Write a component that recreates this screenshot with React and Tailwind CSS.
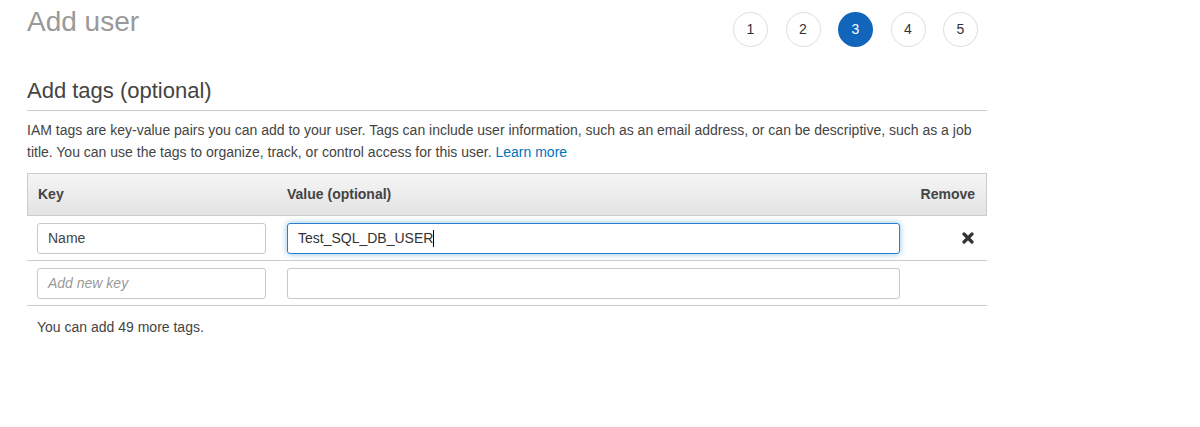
import React from "react";

const STEPS = [1, 2, 3, 4, 5];

function StepCircle({ n, active }) {
  return (
    <div
      className={
        active
          ? "w-[35px] h-[35px] rounded-full bg-[#1166bb] text-white flex items-center justify-center text-[14px]"
          : "w-[35px] h-[35px] rounded-full border border-[#dddddd] bg-white text-[#333] flex items-center justify-center text-[14px]"
      }
    >
      {n}
    </div>
  );
}

function FakeInput({ value, placeholder, focused, width, caret }) {
  return (
    <div
      className={
        focused
          ? "h-[31px] rounded-[3px] border border-[#2a7fd0] shadow-[0_0_6px_rgba(0,115,187,0.45)] bg-white flex items-center px-[10px] text-[14px] text-[#333]"
          : "h-[31px] rounded-[3px] border border-[#c8c8c8] bg-white flex items-center px-[10px] text-[14px] text-[#444]"
      }
      style={{ width }}
    >
      {value ? (
        <span>{value}</span>
      ) : (
        <span className="italic text-[#999]">{placeholder}</span>
      )}
      {caret && <span className="inline-block w-px h-[17px] bg-black" />}
    </div>
  );
}

function RemoveIcon() {
  return (
    <svg width="12" height="12" viewBox="0 0 12 12" fill="none">
      <path d="M2 2 L10 10 M10 2 L2 10" stroke="#333" strokeWidth="3.2" strokeLinecap="round" />
    </svg>
  );
}

export default function App() {
  return (
    <div className="bg-white min-h-[427px] font-['Liberation_Sans',Arial,sans-serif] text-[#444]">
      <div className="w-[960px] ml-[27px]">
        {/* titolo e passi */}
        <div className="flex justify-between items-start">
          <h1 className="text-[28px] leading-[32px] text-[#999] pt-[6px]">Add user</h1>
          <div className="flex gap-[17.5px] mt-[12px] mr-[9px]">
            {STEPS.map((s) => (
              <StepCircle key={s} n={s} active={s === 3} />
            ))}
          </div>
        </div>

        <h2 className="mt-[31px] text-[22px] leading-[26px] pb-[6px] border-b border-[#cccccc] text-[#444]">
          Add tags (optional)
        </h2>

        <p className="mt-[8px] text-[14px] leading-[22px]">
          IAM tags are key-value pairs you can add to your user. Tags can include user information, such as an email
          address, or can be descriptive, such as a job title. You can use the tags to organize, track, or control
          access for this user. <a className="text-[#0073bb]">Learn more</a>
        </p>

        {/* tabella tag */}
        <div className="mt-[10px]">
          <div className="h-[43px] flex items-center border border-[#cccccc] bg-gradient-to-b from-[#f5f5f5] to-[#e3e3e3] text-[14px] font-bold text-[#444]">
            <div className="w-[249px] pl-[10px]">Key</div>
            <div className="w-[633px] pl-[10px]">Value (optional)</div>
            <div className="flex-1 text-right pr-[11px]">Remove</div>
          </div>

          <div className="h-[45px] flex items-center border-b border-[#cccccc]">
            <div className="w-[250px] pl-[10px]">
              <FakeInput value="Name" width={229} />
            </div>
            <div className="w-[633px] pl-[10px]">
              <FakeInput value="Test_SQL_DB_USER" focused caret width={613} />
            </div>
            <div className="flex-1 flex justify-end pr-[13px]">
              <RemoveIcon />
            </div>
          </div>

          <div className="h-[45px] flex items-center border-b border-[#cccccc]">
            <div className="w-[250px] pl-[10px]">
              <FakeInput placeholder="Add new key" width={229} />
            </div>
            <div className="w-[633px] pl-[10px]">
              <FakeInput width={613} />
            </div>
            <div className="flex-1" />
          </div>
        </div>

        <p className="mt-[11px] pl-[10px] text-[14px] leading-[20px]">You can add 49 more tags.</p>
      </div>
    </div>
  );
}
